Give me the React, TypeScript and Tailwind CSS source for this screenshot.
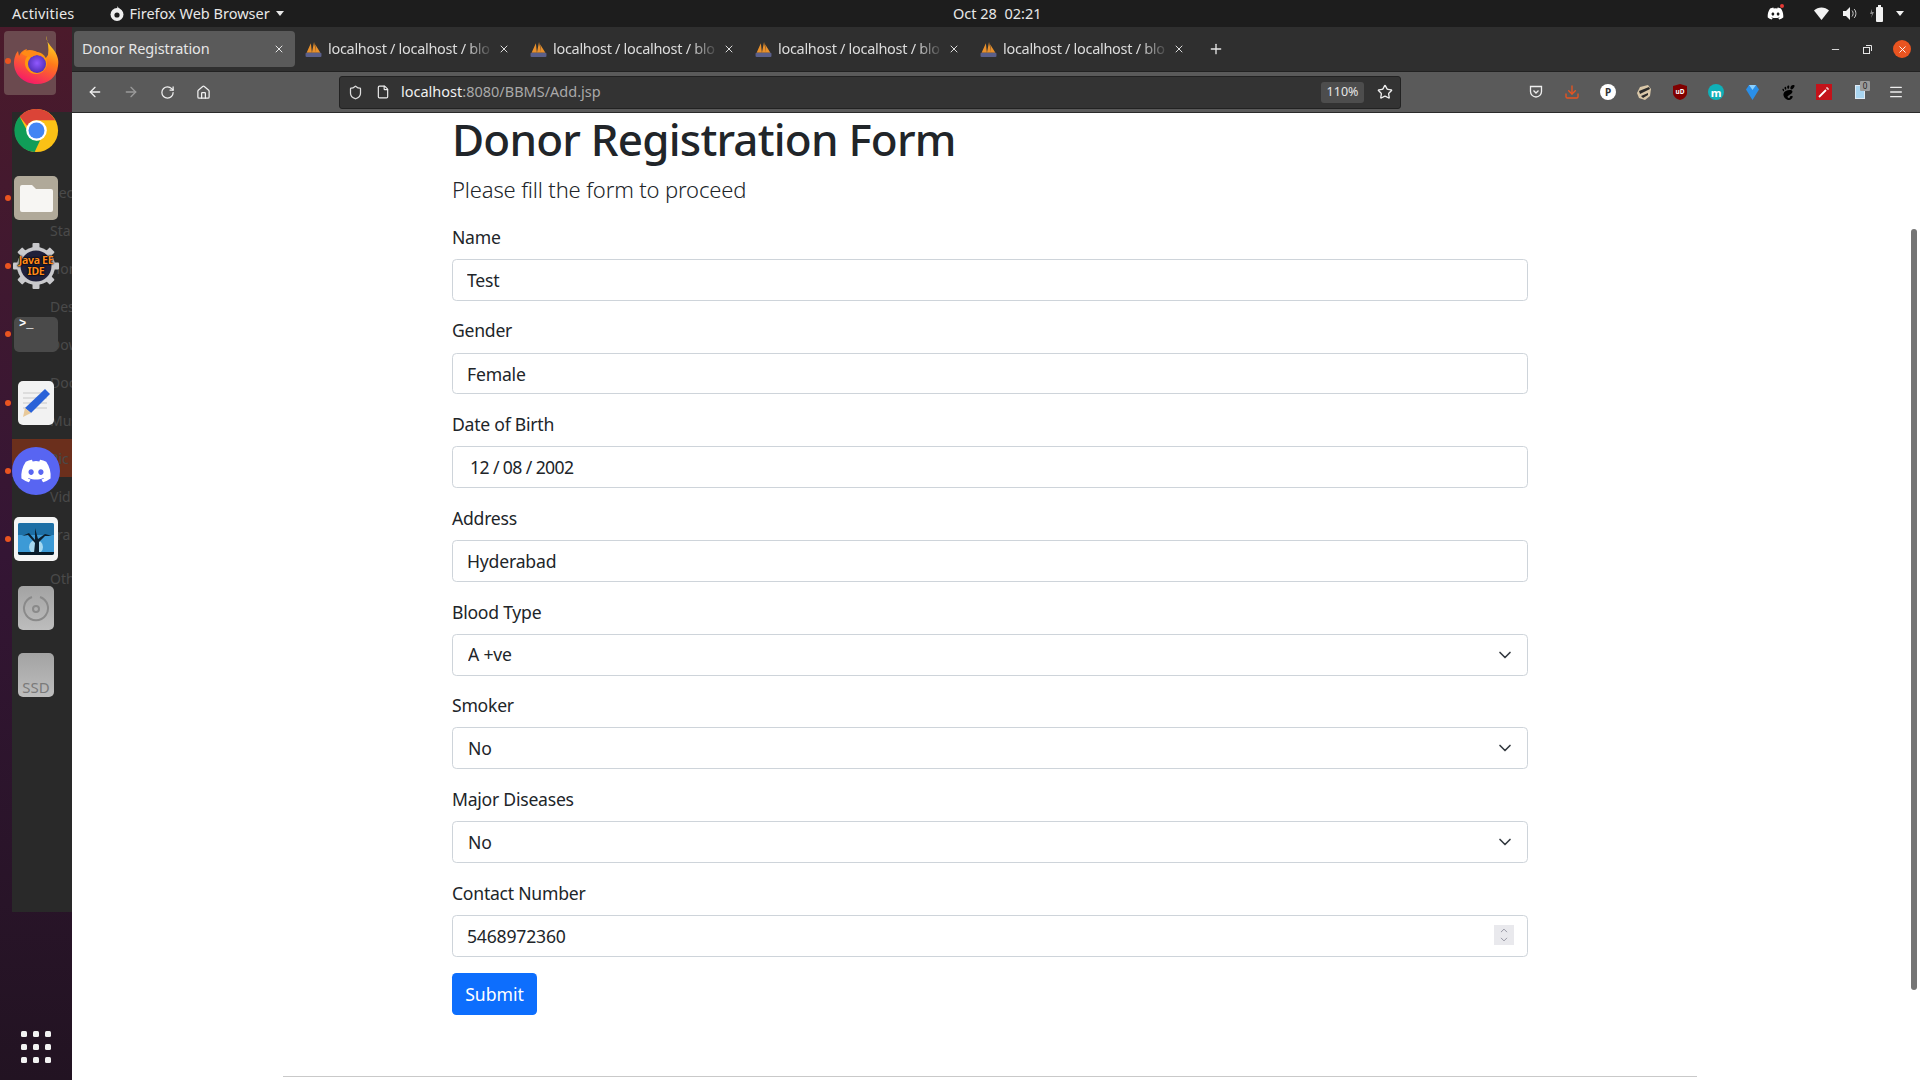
import { ArrowLeft, ArrowRight, ChevronDown, ChevronUp, Download, File, Home, Menu, Minus, Plus, RotateCw, Shield, Star, X } from "lucide-react";
import { FaDiscord } from "react-icons/fa";
import { SiGnome } from "react-icons/si";

const ghostRows = [
    { name: "Rec", h: "h-[38px]" },
    { name: "Sta", h: "h-[38px]" },
    { name: "Hom", h: "h-[38px]" },
    { name: "Des", h: "h-[38px]" },
    { name: "Dow", h: "h-[38px]" },
    { name: "Doc", h: "h-[38px]" },
    { name: "Mus", h: "h-[38px]" },
    { name: "Pic", h: "h-[38px] bg-[#6b2f1c]" },
    { name: "Vid", h: "h-[38px]" },
    { name: "Tra", h: "h-[38px]" },
    { name: "Oth", h: "h-[36px] items-end" },
];

function FirefoxIcon({ size = 48 }: { size?: number }) {
    return (
        <svg width={size} height={size} viewBox="0 0 48 48">
            <defs>
                <linearGradient id="ffa" x1="0.7" y1="0" x2="0.3" y2="1">
                    <stop offset="0" stopColor="#ffe226" />
                    <stop offset="0.45" stopColor="#ff7a1a" />
                    <stop offset="1" stopColor="#f5156c" />
                </linearGradient>
                <radialGradient id="ffb" cx="0.5" cy="0.45" r="0.6">
                    <stop offset="0" stopColor="#9059ff" />
                    <stop offset="1" stopColor="#4b2ab0" />
                </radialGradient>
            </defs>
            <path d="M34 1c1 5 3 7 7 12 5 6 6 12 5 17-1 11-10 18-21 18C12 48 2 39 2 27c0-5 2-10 4-12l1 5c1-3 4-6 8-7-1 2-1 3 0 4 3-2 7-2 10-1 6 2 8 7 6 10l5-7c1-7 0-13-2-19z" fill="url(#ffa)" />
            <circle cx="24" cy="27" r="11" fill="#ff980e" />
            <circle cx="25" cy="28" r="9" fill="url(#ffb)" />
            <path d="M9 17c4-3 9-4 14-2 3 1 5 3 6 5-4-2-7-1-9 1-3 0-8-1-11-4z" fill="#ff8a16" />
        </svg>
    );
}

function ChromeIcon() {
    return (
        <svg width="45" height="45" viewBox="0 0 48 48">
            <circle cx="24" cy="24" r="23" fill="#fbc116" />
            <path d="M24 1a23 23 0 0 1 20 12H24a11 11 0 0 0-10 6L6 9A23 23 0 0 1 24 1z" fill="#db4437" />
            <path d="M6 9l9 17a10 10 0 0 0 13 8l-6 13A23 23 0 0 1 6 9z" fill="#109d58" />
            <circle cx="24" cy="24" r="11" fill="#fff" />
            <circle cx="24" cy="24" r="8.5" fill="#4285f4" />
        </svg>
    );
}

function JavaIcon() {
    return (
        <div className="relative flex h-[46px] w-[46px] items-center justify-center">
            <svg width="46" height="46" viewBox="0 0 46 46" className="absolute inset-0">
                <g fill="#c9c9cc">
                    {[0, 45, 90, 135, 180, 225, 270, 315].map((a) => (
                        <rect key={a} x="19.500" y="0" width="7" height="8" rx="1" transform={`rotate(${a} 23 23)`} />
                    ))}
                </g>
                <circle cx="23" cy="23" r="19" fill="#c9c9cc" />
                <circle cx="23" cy="23" r="15.500" fill="#20203a" />
            </svg>
            <span className="relative whitespace-nowrap text-center text-[10.5px] leading-[11px] font-bold tracking-[-0.3px] text-[#ff8a1c] [text-shadow:0_0_2px_#000,0_0_2px_#000,0_0_1px_#000]">
                Java EE
                <br />
                IDE
            </span>
        </div>
    );
}

function Dock() {
    const tile = "flex items-center justify-center rounded-[5px]";
    return (
        <aside className="relative h-full w-[72px] shrink-0 bg-gradient-to-b from-[#4b1a2b] via-[#341534] to-[#221322]">
            {/* window peeking out behind the dock */}
            <div className="mt-[85px] ml-[12px] h-[800px] bg-[#292929] pt-[61px] pl-[38px] text-[14px] text-[#4a4a4a]">
                {ghostRows.map((r) => (
                    <div key={r.name} className={`-ml-[38px] flex items-center pl-[38px] ${r.h}`}>
                        {r.name}
                    </div>
                ))}
            </div>

            <div className="absolute inset-0">
                <div className="absolute top-[4px] left-[4px] h-[64px] w-[52px] rounded-[4px] bg-[#6b4a4f]" />
                {[34, 171, 239, 307, 376, 444, 512].map((y) => (
                    <div key={y} style={{ top: y - 3 }} className="absolute left-[5px] h-[6px] w-[6px] rounded-full bg-[#e95420]" />
                ))}

                <div className="absolute top-[9px] left-[12px]"><FirefoxIcon /></div>
                <div className="absolute top-[81px] left-[14px]"><ChromeIcon /></div>

                <div className={`absolute top-[149px] left-[14px] h-[44px] w-[44px] bg-[#b0a999] ${tile}`}>
                    <svg width="33" height="27" viewBox="0 0 33 27">
                        <path d="M2 0h10l4 4h15a2 2 0 0 1 2 2v19a2 2 0 0 1-2 2H2a2 2 0 0 1-2-2V2a2 2 0 0 1 2-2z" fill="#f7f6f3" />
                    </svg>
                </div>

                <div className="absolute top-[216px] left-[13px]"><JavaIcon /></div>

                <div className={`absolute top-[290px] left-[14px] h-[35px] w-[44px] items-start justify-start bg-[#4a4a4a] ${tile}`}>
                    <span className="pl-[5px] font-['Liberation_Mono',monospace] text-[12px] leading-[14px] font-bold text-white">&gt;_</span>
                </div>

                <div className={`absolute top-[354px] left-[18px] h-[44px] w-[36px] bg-[#f2f2f2] ${tile}`}>
                    <svg width="30" height="34" viewBox="0 0 30 32">
                        <g stroke="#c8c8c8" strokeWidth="1"><path d="M2 6h24M2 11h24M2 16h24M2 21h24" /></g>
                        <path d="M24 2l5 5L10 26l-6-5z" fill="#2a62d8" />
                        <path d="M4 21l6 5-8 4z" fill="#e8c99a" />
                    </svg>
                </div>

                <div className="absolute top-[420px] left-[12px] flex h-[48px] w-[48px] items-center justify-center rounded-full bg-[#5865f2] text-white">
                    <FaDiscord size={32} />
                </div>

                <div className={`absolute top-[490px] left-[14px] h-[44px] w-[44px] bg-[#f5f5f5] ${tile}`}>
                    <svg width="36" height="32" viewBox="0 0 36 32" className="rounded-[2px]">
                        <rect width="36" height="32" fill="#3c9ad6" />
                        <rect width="36" height="12" fill="#1d6fa5" />
                        <circle cx="18" cy="24" r="7" fill="#a6d8f0" />
                        <path d="M0 29h36v3H0z" fill="#071a28" />
                        <path d="M16 30l1-10-7-8-6 1 7-3 6 7 0-12 3 11 7-5 7 2-7 0-6 6 0 11z" fill="#0c1f2e" />
                    </svg>
                </div>

                <div className={`absolute top-[559px] left-[18px] h-[44px] w-[36px] bg-gradient-to-b from-[#a3a3a3] to-[#bdbdbd] ${tile}`}>
                    <svg width="28" height="28" viewBox="0 0 28 28" fill="none" stroke="#8a8a8a" strokeWidth="2">
                        <path d="M18 3a12 12 0 1 1-8 0" />
                        <circle cx="14" cy="15" r="3" />
                    </svg>
                </div>

                <div className={`absolute top-[626px] left-[18px] h-[44px] w-[36px] items-end bg-gradient-to-b from-[#a3a3a3] to-[#bdbdbd] ${tile}`}>
                    <span className="text-[15px] leading-[20px] text-[#7a7a7a]">SSD</span>
                </div>

                <div className="absolute top-[1004px] left-[21px] grid grid-cols-3 gap-x-[6px] gap-y-[7px]">
                    {[1, 2, 3, 4, 5, 6, 7, 8, 9].map((n) => (
                        <span key={n} className="h-[6px] w-[6px] rounded-[1.5px] bg-[#f2f2f2]" />
                    ))}
                </div>
            </div>
        </aside>
    );
}

function TopBar() {
    return (
        <header className="relative flex h-[27px] shrink-0 items-center bg-[#1d1d1d] pl-[12px] text-[14.5px] text-[#e8e8e8]">
            <span className="tracking-[0.2px]">Activities</span>
            <svg width="16" height="16" viewBox="0 0 16 16" className="ml-[35px]">
                <circle cx="8" cy="8.5" r="6.5" fill="#eee" />
                <circle cx="8" cy="9" r="2.6" fill="#1d1d1d" />
                <path d="M8 0c1 2 4 3 5 6L9 5z" fill="#eee" />
            </svg>
            <span className="ml-[4px]">Firefox Web Browser</span>
            <span className="ml-[6px] h-0 w-0 border-x-[4px] border-t-[5px] border-x-transparent border-t-[#e8e8e8]" />
            <span className="absolute left-[953px] whitespace-pre">Oct 28  02:21</span>
            <div className="ml-auto flex items-center pr-[16px]">
                <span className="relative mr-[30px] text-white">
                    <FaDiscord size={17} />
                    <span className="absolute -top-[1px] right-0 h-[4px] w-[4px] rounded-full bg-[#e53935]" />
                </span>
                <svg width="15" height="13" viewBox="0 0 15 13" className="mr-[14px]">
                    <path d="M0 3.5C4-.5 11-.5 15 3.5L7.500 13z" fill="#f2f2f2" />
                </svg>
                <svg width="14" height="13" viewBox="0 0 14 13" className="mr-[13px]" fill="none">
                    <path d="M0 4h3l4-4v13l-4-4H0z" fill="#f2f2f2" />
                    <path d="M9 3.500c1.500 1.500 1.500 4.500 0 6M11 2c2.500 2 2.500 7 0 9" stroke="#cfcfcf" />
                </svg>
                <svg width="13" height="17" viewBox="0 0 13 17" className="mr-[13px]">
                    <path d="M2 4L0 9h2l-1 4 3-6H2z" fill="#888" />
                    <rect x="6" y="2" width="7" height="15" rx="1" fill="#f2f2f2" />
                    <rect x="8" y="0" width="3" height="2" fill="#f2f2f2" />
                </svg>
                <span className="h-0 w-0 border-x-[4px] border-t-[5px] border-x-transparent border-t-[#f2f2f2]" />
            </div>
        </header>
    );
}

function PmaIcon() {
    return (
        <svg width="17" height="17" viewBox="0 0 15 16">
            <path d="M1 11L5 2l1 9zM6 11l2-10 2 10zM10 11L9 3l5 8z" fill="#e9902b" />
            <rect x="0" y="11" width="15" height="4" rx="1" fill="#5a5f8a" />
        </svg>
    );
}

function TabBar() {
    return (
        <div className="flex h-[45px] shrink-0 items-center border-b border-[#222] bg-[#2f2f2f] pl-[2px] text-[14.5px]">
            <div className="flex h-[36px] w-[221px] items-center justify-between rounded-[4px] bg-[#5a5a5a] pr-[10px] pl-[8px] text-[#e6e6e6]">
                <span className="tracking-[-0.1px]">Donor Registration</span>
                <X size={12} color="#e6e6e6" />
            </div>
            {[1, 2, 3, 4].map((n) => (
                <div key={n} className="flex h-[36px] w-[225px] shrink-0 items-center pr-[10px] pl-[10px] text-[#dcdcdc] first:ml-[2px]">
                    <PmaIcon />
                    <span className="ml-[6px] whitespace-nowrap tracking-[-0.3px] [mask-image:linear-gradient(to_right,#000_85%,rgba(0,0,0,0.15))]">
                        localhost / localhost / blo
                    </span>
                    <X size={12} color="#dcdcdc" className="ml-auto" />
                </div>
            ))}
            <Plus size={16} color="#e6e6e6" className="ml-[13px]" />
            <div className="ml-auto flex items-center pr-[9px] text-[#e6e6e6]">
                <Minus size={11} className="mr-[22px]" />
                <svg width="9" height="9" viewBox="0 0 9 9" fill="none" stroke="#e6e6e6" className="mr-[21px]">
                    <rect x="0.500" y="2.500" width="6" height="6" />
                    <path d="M3 0.500h5.500V6" />
                </svg>
                <span className="flex h-[18px] w-[18px] items-center justify-center rounded-full bg-[#e95420]">
                    <X size={11} color="#fff" />
                </span>
            </div>
        </div>
    );
}

function ExtIcons() {
    const slot = "flex w-[36px] items-center justify-center";
    return (
        <div className="ml-auto flex items-center pr-[6px]">
            <div className={slot}>
                <svg width="14" height="14" viewBox="0 0 14 14" fill="none" stroke="#eee" strokeWidth="1.300">
                    <path d="M1.500 1.500h11v5a5.500 5.500 0 0 1-11 0z" />
                    <path d="M4.500 5.500L7 8l2.500-2.500" />
                </svg>
            </div>
            <div className={slot}><Download size={16} color="#e95420" /></div>
            <div className={slot}>
                <span className="flex h-[16px] w-[16px] items-center justify-center rounded-full bg-white text-[10px] font-bold text-[#333]">P</span>
            </div>
            <div className={slot}>
                <svg width="16" height="15" viewBox="0 0 16 15">
                    <path d="M1 8l3-6 8-2 3 4-1 7-5 4-6-2z" fill="#d9c7a8" />
                    <path d="M3 6l10-4 1 2L4 9zM5 11l7-3 0 2-5 3z" fill="#2b2b2b" />
                </svg>
            </div>
            <div className={slot}>
                <svg width="14" height="16" viewBox="0 0 14 16">
                    <path d="M7 0l7 2v7c0 3-3 6-7 7-4-1-7-4-7-7V2z" fill="#800000" />
                    <text x="7" y="9.500" textAnchor="middle" fontSize="6.500" fontWeight="700" fill="#fff">uD</text>
                </svg>
            </div>
            <div className={slot}>
                <span className="flex h-[16px] w-[16px] items-center justify-center rounded-full bg-[#0fb0b8] text-[11px] leading-none font-bold text-white">m</span>
            </div>
            <div className={slot}>
                <svg width="13" height="15" viewBox="0 0 13 15">
                    <path d="M3 0h7l3 4.500L6.500 15 0 4.500z" fill="#2a8fe8" />
                    <path d="M3 0h7L6.500 5z" fill="#8ad0ff" />
                </svg>
            </div>
            <div className={slot}><SiGnome size={15} color="#000" /></div>
            <div className={slot}>
                <span className="flex h-[16px] w-[16px] items-center justify-center bg-[#c4121a]">
                    <svg width="12" height="12" viewBox="0 0 12 12" stroke="#fff" strokeWidth="1.800"><path d="M1 11l7-7" /><path d="M9 1v2M11 3H9" strokeWidth="1" /></svg>
                </span>
            </div>
            <div className={slot}>
                <span className="relative h-[14px] w-[10px] border border-[#dfeaf5] bg-[#a9d5f0]">
                    <span className="absolute -top-[5px] -right-[6px] flex h-[10px] w-[10px] items-center justify-center rounded-[1px] bg-[#9a9a9a] text-[8px] leading-none text-[#222]">0</span>
                </span>
            </div>
            <div className={slot}><Menu size={16} color="#eee" /></div>
        </div>
    );
}

function Toolbar() {
    return (
        <div className="flex h-[41px] shrink-0 items-center border-b border-[#2a2a2a] bg-[#5a5a5a]">
            <div className="flex items-center pl-[5px]">
                <div className="flex w-[36px] justify-center"><ArrowLeft size={16} color="#f0f0f0" /></div>
                <div className="flex w-[36px] justify-center"><ArrowRight size={16} color="#9a9a9a" /></div>
                <div className="flex w-[36px] justify-center"><RotateCw size={15} color="#f0f0f0" /></div>
                <div className="flex w-[36px] justify-center"><Home size={15} color="#f0f0f0" /></div>
            </div>
            <div className="ml-[118px] flex h-[33px] w-[1062px] items-center rounded-[3px] border border-[#222] bg-[#333] pr-[6px] text-[14.5px]">
                <Shield size={15} color="#ddd" className="ml-[8px]" />
                <File size={14} color="#eee" className="ml-[13px]" />
                <span className="ml-[11px] text-[#f0f0f0]">localhost<span className="text-[#a9a9a9]">:8080/BBMS/Add.jsp</span></span>
                <span className="ml-auto flex h-[21px] w-[43px] items-center justify-center rounded-[3px] bg-[#4d4d4d] text-[12.5px] text-[#e6e6e6]">110%</span>
                <Star size={16} color="#eee" className="mr-[1px] ml-[13px]" />
            </div>
            <ExtIcons />
        </div>
    );
}

const controlClass =
    "h-[41.800px] w-full appearance-none rounded-[4.400px] border border-[#ced4da] bg-white text-[17.600px] tracking-[-0.2px] text-[#212529] outline-none";

function Field({ label, children }: { label: string; children: React.ReactNode }) {
    return (
        <div className="mb-[16.700px]">
            <label className="mb-[8.800px] block text-[17.600px] leading-[26.400px] tracking-[-0.25px] text-[#212529]">{label}</label>
            {children}
        </div>
    );
}

function SelectField({ label, value }: { label: string; value: string }) {
    return (
        <Field label={label}>
            <div className="relative">
                <select defaultValue={value} className={`${controlClass} pl-[15px]`}>
                    <option>{value}</option>
                </select>
                <ChevronDown size={20} strokeWidth={2} color="#343a40" className="absolute top-[11px] right-[13px]" />
            </div>
        </Field>
    );
}

function DonorForm() {
    return (
        <div className="ml-[380px] w-[1076px]">
            <h1 className="text-[44px] leading-[52.800px] font-medium tracking-[-0.8px] text-[#212529]">Donor Registration Form</h1>
            <p className="mt-[7px] mb-[18px] text-[22px] leading-[33px] font-light tracking-[-0.15px] text-[#212529]">Please fill the form to proceed</p>

            <Field label="Name">
                <input readOnly value="Test" className={`${controlClass} px-[14px]`} />
            </Field>
            <Field label="Gender">
                <input readOnly value="Female" className={`${controlClass} px-[14px]`} />
            </Field>
            <Field label="Date of Birth">
                <input readOnly value="12 / 08 / 2002" className={`${controlClass} px-[17px] tracking-[-0.6px]`} />
            </Field>
            <Field label="Address">
                <input readOnly value="Hyderabad" className={`${controlClass} px-[14px]`} />
            </Field>
            <SelectField label="Blood Type" value="A +ve" />
            <SelectField label="Smoker" value="No" />
            <SelectField label="Major Diseases" value="No" />
            <Field label="Contact Number">
                <div className="relative">
                    <input readOnly value="5468972360" className={`${controlClass} px-[14px]`} />
                    <span className="absolute top-[10px] right-[14px] flex h-[20px] w-[20px] flex-col items-center justify-center bg-[#e9e9ed]">
                        <ChevronUp size={12} color="#8f8f9d" className="-mb-[1px]" />
                        <ChevronDown size={12} color="#8f8f9d" className="-mt-[1px]" />
                    </span>
                </div>
            </Field>
            <button className="-mt-[0.500px] h-[41.800px] w-[85px] rounded-[4.400px] bg-[#0d6efd] text-[17.600px] text-white">Submit</button>
        </div>
    );
}

export default function App() {
    return (
        <div className="flex h-screen w-full flex-col overflow-hidden bg-white font-['Noto_Sans',sans-serif]">
            <TopBar />
            <div className="flex min-h-0 flex-1">
                <Dock />
                <div className="flex min-w-0 flex-1 flex-col">
                    <TabBar />
                    <Toolbar />
                    <main className="relative min-h-0 flex-1 overflow-hidden bg-white">
                        <DonorForm />
                        <hr className="mt-[61px] ml-[211px] w-[1414px] border-t border-[#c9c9c9]" />
                        {/* overlay scrollbar */}
                        <div className="absolute top-[116px] right-[3px] h-[761px] w-[6px] rounded-[3px] bg-[#757575]" />
                    </main>
                </div>
            </div>
        </div>
    );
}
